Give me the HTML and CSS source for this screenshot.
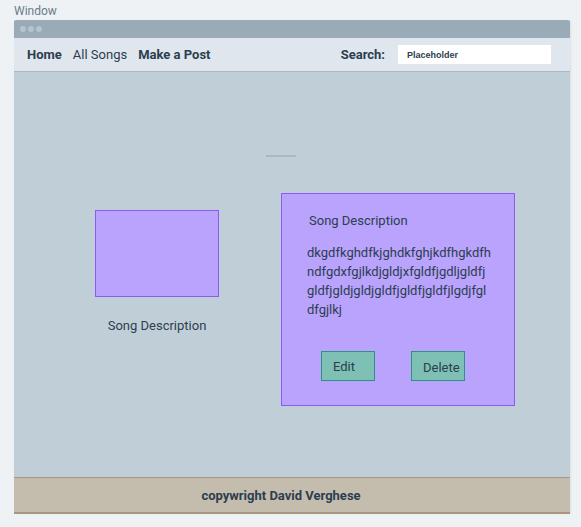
FILE: index.html
```html
<!DOCTYPE html>
<html lang="en">
<head>
    <meta charset="UTF-8">
    <meta name="viewport" content="width=device-width, initial-scale=1.0">
    <title>Songs</title>
    <link rel="stylesheet" href="styles.css">
</head>
<body>
    <div class="window-label">Window</div>
    <div class="window">
        <div class="titlebar">
            <span class="dot"></span>
            <span class="dot"></span>
            <span class="dot"></span>
        </div>
        <nav class="navbar">
            <div class="links">
                <a href="#" class="bold">Home</a>
                <a href="#">All Songs</a>
                <a href="#" class="bold">Make a Post</a>
            </div>
            <div class="search">
                <label for="search">Search:</label>
                <input id="search" type="text" placeholder="Placeholder">
            </div>
        </nav>
        <main class="content">
            <div class="divider"></div>
            <div class="song-row">
                <div class="song-thumb">
                    <div class="thumb"></div>
                    <p>Song Description</p>
                </div>
                <div class="song-card">
                    <h3>Song Description</h3>
                    <p class="desc">dkgdfkghdfkjghdkfghjkdfhgkdfh<br>ndfgdxfgjlkdjgldjxfgldfjgdljgldfj<br>gldfjgldjgldjgldfjgldfjgldfjlgdjfgl<br>dfgjlkj</p>
                    <div class="actions">
                        <button>Edit</button>
                        <button class="delete">Delete</button>
                    </div>
                </div>
            </div>
        </main>
        <footer class="footer">copywright David Verghese</footer>
    </div>
</body>
</html>
```

FILE: styles.css
```css
body {
    font-family: Roboto, "Noto Sans", sans-serif;
    background-color: #eef2f5;
    color: #2c3e50;
    margin: 0;
    padding: 0;
}
.window-label {
    font-size: 12px;
    color: #6b7b88;
    padding-left: 14px;
    height: 20px;
    line-height: 22px;
}
.window {
    width: 556px;
    margin-left: 14px;
    box-shadow: 1px 1px 2px rgba(0, 0, 0, 0.08);
}
.titlebar {
    height: 18px;
    background: #9aabb8;
    border-radius: 2px 2px 0 0;
    display: flex;
    align-items: center;
    gap: 2px;
    padding-left: 6px;
}
.dot {
    width: 6px;
    height: 6px;
    border-radius: 50%;
    background: #b6c3cd;
}
.navbar {
    height: 33px;
    background: #dfe6ed;
    border-bottom: 1px solid #a9b7c2;
    display: flex;
    align-items: center;
    justify-content: space-between;
    padding: 0 19px 0 13px;
}
.links {
    display: flex;
    gap: 11px;
}
.links a {
    text-decoration: none;
    color: #2c3e50;
    font-size: 13px;
}
.links a.bold,
.search label {
    font-weight: bold;
}
.search {
    display: flex;
    align-items: center;
    gap: 13px;
}
.search label {
    font-size: 13px;
}
.search input {
    width: 153px;
    height: 19px;
    box-sizing: border-box;
    border: none;
    background: white;
    padding: 0 9px;
    font-family: "Liberation Sans", Arial, sans-serif;
    font-size: 9px;
    font-weight: bold;
}
.search input::placeholder {
    color: #2c3e50;
}
.content {
    height: 405px;
    background: #c0ced8;
    padding-top: 83px;
    box-sizing: border-box;
}
.divider {
    width: 30px;
    height: 2px;
    background: #a9b8c4;
    margin-left: 252px;
}
.song-row {
    display: flex;
    align-items: flex-start;
    gap: 62px;
    margin-top: 36px;
    padding-left: 81px;
}
.song-thumb {
    margin-top: 17px;
    text-align: center;
}
.thumb {
    width: 122px;
    height: 85px;
    background: #b9a3fd;
    border: 1px solid #8a5cf5;
}
.song-thumb p {
    font-size: 13px;
    margin: 21px 0 0 0;
}
.song-card {
    background: #b9a3fd;
    border: 1px solid #8a5cf5;
    padding: 19px 7px 0 25px;
    width: 200px;
    height: 192px;
}
.song-card h3 {
    font-size: 13px;
    font-weight: normal;
    margin: 0 0 0 2px;
}
.desc {
    font-size: 13px;
    line-height: 19px;
    margin: 15px 0 0 0;
}
.actions {
    display: flex;
    gap: 36px;
    margin-top: 32px;
    padding-left: 14px;
}
.actions button {
    width: 54px;
    height: 30px;
    background: #7fc0b5;
    border: 1px solid #2a9483;
    color: #2c3e50;
    font-family: Roboto, "Noto Sans", sans-serif;
    font-size: 13px;
    text-align: left;
    padding: 0 0 0 11px;
}
.actions .delete {
    padding-top: 3px;
}
.footer {
    height: 34px;
    background: #c4bcad;
    border-top: 1px solid #a8977e;
    border-bottom: 2px solid #a8977e;
    text-align: center;
    line-height: 36px;
    font-size: 13px;
    font-weight: bold;
    padding-right: 22px;
}
```
